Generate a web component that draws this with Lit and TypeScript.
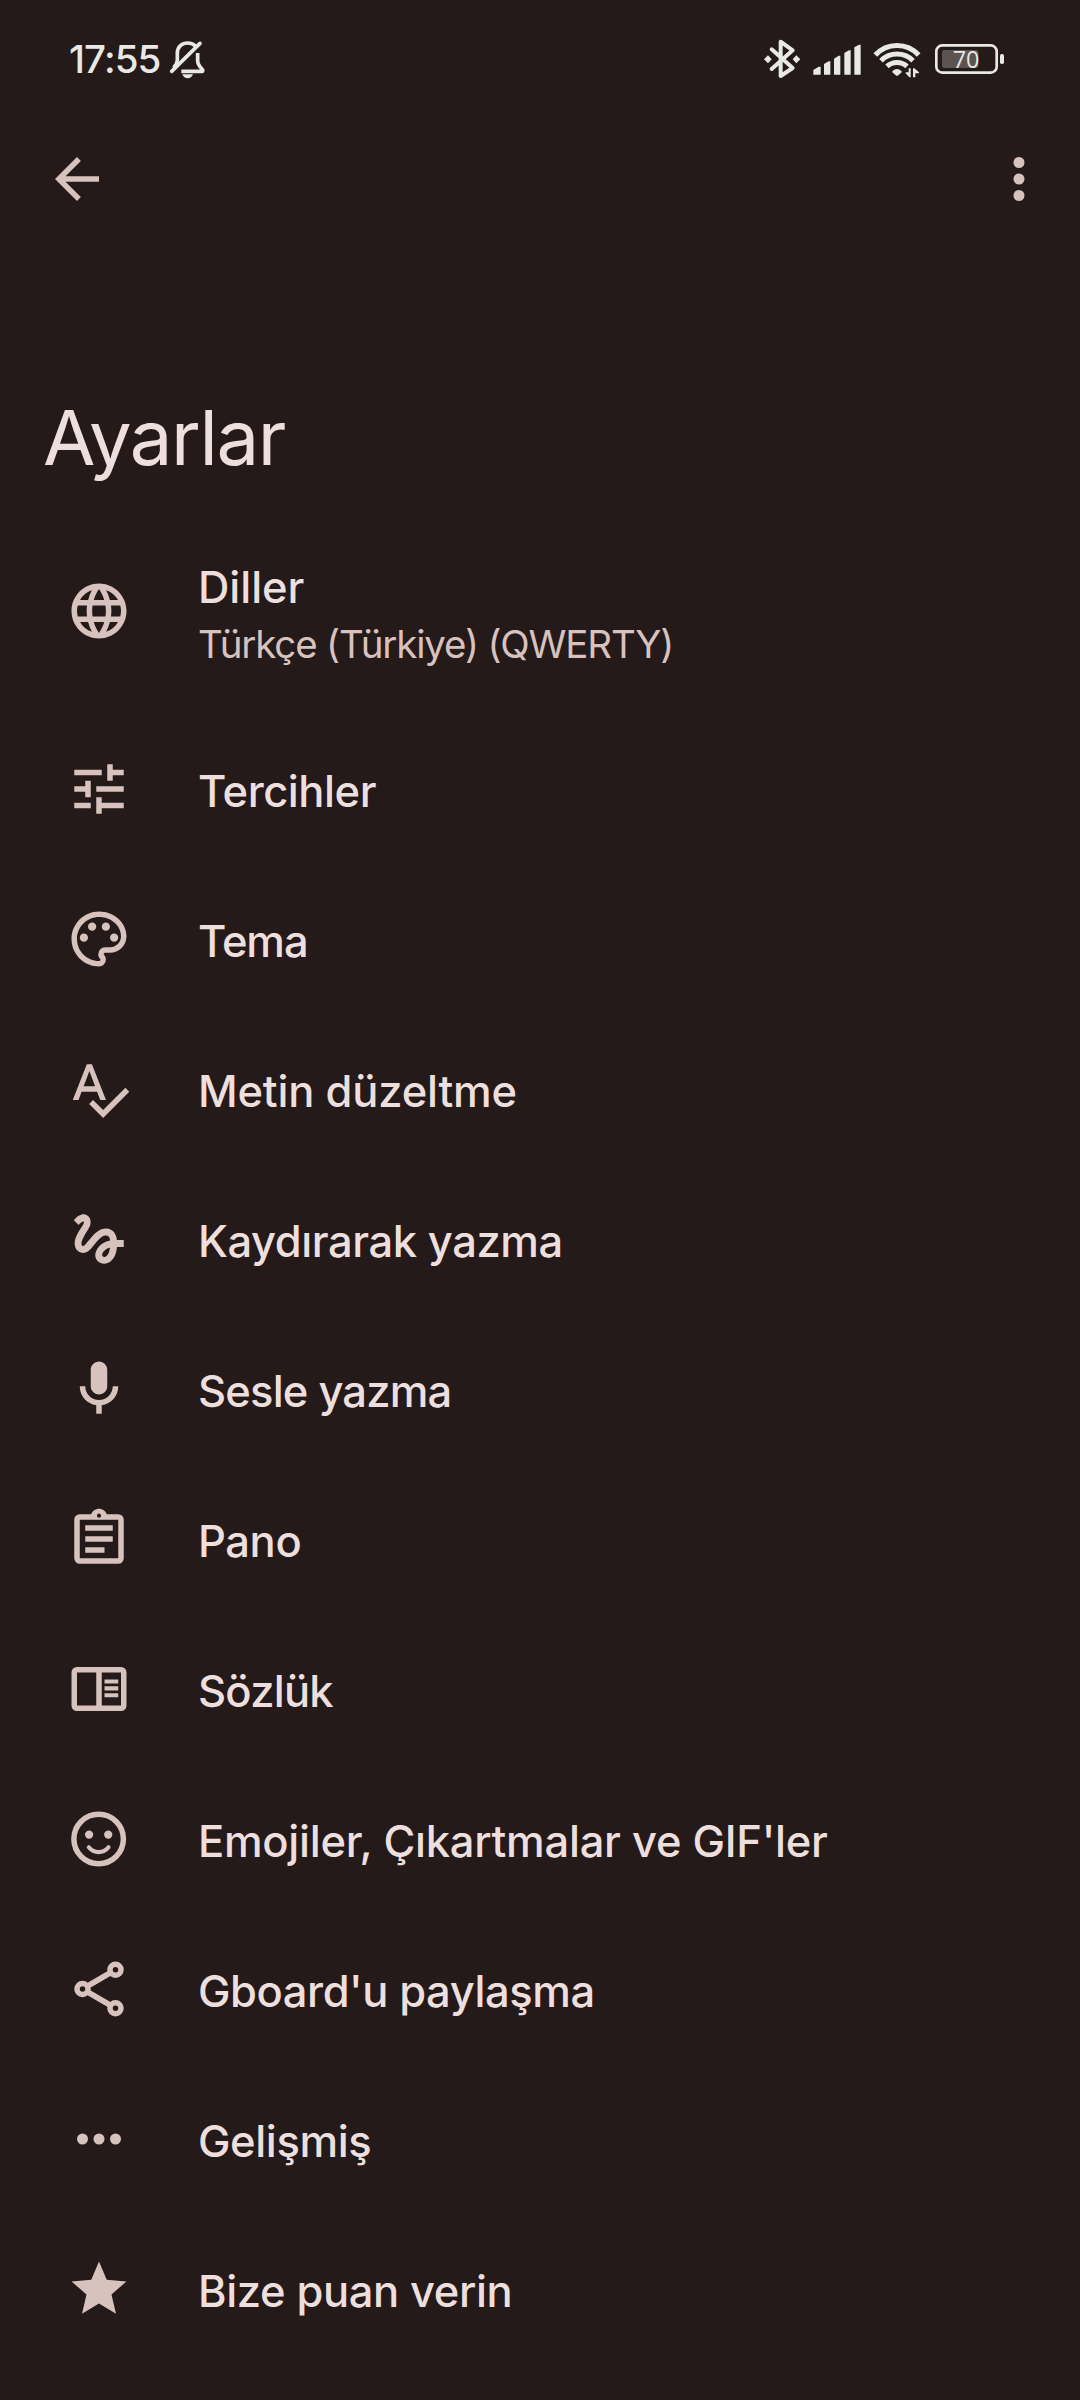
import { LitElement, html, svg, css } from "lit";
import { customElement } from "lit/decorators.js";
import { styleMap } from "lit/directives/style-map.js";

const icons = {
  language: svg`<path d="M11.99 2C6.47 2 2 6.48 2 12s4.47 10 9.99 10C17.52 22 22 17.52 22 12S17.52 2 11.99 2zm6.93 6h-2.95c-.32-1.25-.78-2.45-1.38-3.56 1.84.63 3.37 1.91 4.33 3.56zM12 4.04c.83 1.2 1.48 2.53 1.91 3.96h-3.82c.43-1.43 1.08-2.76 1.91-3.96zM4.26 14C4.1 13.36 4 12.69 4 12s.1-1.36.26-2h3.38c-.08.66-.14 1.32-.14 2s.06 1.34.14 2H4.26zm.82 2h2.95c.32 1.25.78 2.45 1.38 3.56-1.84-.63-3.37-1.9-4.33-3.56zm2.95-8H5.08c.96-1.66 2.49-2.93 4.33-3.56C8.81 5.55 8.35 6.75 8.03 8zM12 19.96c-.83-1.2-1.48-2.53-1.91-3.96h3.82c-.43 1.43-1.08 2.76-1.91 3.96zM14.34 14H9.66c-.09-.66-.16-1.32-.16-2s.07-1.35.16-2h4.68c.09.65.16 1.32.16 2s-.07 1.34-.16 2zm.25 5.56c.6-1.11 1.06-2.31 1.38-3.56h2.95c-.96 1.65-2.49 2.93-4.33 3.56zM16.36 14c.08-.66.14-1.32.14-2s-.06-1.34-.14-2h3.38c.16.64.26 1.31.26 2s-.1 1.36-.26 2h-3.38z"/>`,
  tune: svg`<path d="M3 17v2h6v-2H3zM3 5v2h10V5H3zm10 16v-2h8v-2h-8v-2h-2v6h2zM7 9v2H3v2h4v2h2V9H7zm14 4v-2H11v2h10zm-6-4h2V7h4V5h-4V3h-2v6z"/>`,
  palette: svg`<path d="M12 22C6.49 22 2 17.51 2 12S6.49 2 12 2s10 4.04 10 9c0 3.31-2.69 6-6 6h-1.77c-.28 0-.5.22-.5.5 0 .12.05.23.13.33.41.47.64 1.06.64 1.67A2.5 2.5 0 0 1 12 22zm0-18c-4.41 0-8 3.59-8 8s3.59 8 8 8c.28 0 .5-.22.5-.5a.54.54 0 0 0-.14-.35c-.41-.46-.63-1.05-.63-1.65a2.5 2.5 0 0 1 2.5-2.5H16c2.21 0 4-1.79 4-4 0-3.86-3.59-7-8-7z"/><circle cx="6.5" cy="11.5" r="1.5"/><circle cx="9.5" cy="7.5" r="1.5"/><circle cx="14.5" cy="7.5" r="1.5"/><circle cx="17.5" cy="11.5" r="1.5"/>`,
  spellcheck: svg`<path d="M12.45 16h2.09L9.43 3H7.57L2.46 16h2.09l1.12-3h5.64l1.14 3zm-6.02-5L8.5 5.48 10.57 11H6.43zm15.16.59l-8.09 8.09L9.83 16l-1.41 1.41 5.09 5.09L23 13l-1.41-1.41z"/>`,
  gesture: svg`<path d="M4.59 6.89c.7-.71 1.4-1.35 1.71-1.22.5.2 0 1.03-.3 1.52-.25.42-2.86 3.89-2.86 6.31 0 1.28.48 2.34 1.34 2.98.75.56 1.74.73 2.64.46 1.07-.31 1.95-1.4 3.06-2.77 1.21-1.49 2.83-3.44 4.08-3.44 1.63 0 1.65 1.01 1.76 1.79-3.78.64-5.38 3.67-5.38 5.37 0 1.7 1.44 3.09 3.21 3.09 1.63 0 4.29-1.33 4.69-6.1H21v-2.5h-2.47c-.15-1.65-1.09-4.2-4.03-4.2-2.25 0-4.18 1.91-4.94 2.84-.58.73-2.06 2.48-2.29 2.72-.25.3-.68.84-1.11.84-.45 0-.72-.83-.36-1.92.35-1.09 1.4-2.86 1.85-3.52.78-1.14 1.3-1.92 1.3-3.28C8.95 3.69 7.31 3 6.44 3 5.12 3 3.97 4 3.72 4.25c-.36.36-.66.66-.88.93l1.75 1.71zm9.29 11.66c-.31 0-.74-.26-.74-.72 0-.6.73-2.2 2.87-2.76-.3 2.69-1.43 3.48-2.13 3.48z"/>`,
  mic: svg`<path d="M12 14c1.66 0 3-1.34 3-3V5c0-1.66-1.34-3-3-3S9 3.34 9 5v6c0 1.66 1.34 3 3 3zm5-3c0 2.76-2.24 5-5 5s-5-2.24-5-5H5c0 3.53 2.61 6.43 6 6.92V21h2v-3.08c3.39-.49 6-3.39 6-6.92h-2z"/>`,
  clipboard: svg`<path d="M7 15h7v2H7zm0-4h10v2H7zm0-4h10v2H7z"/><path fill-rule="evenodd" d="M19 3h-4.18C14.4 1.84 13.3 1 12 1s-2.4.84-2.82 2H5a2 2 0 0 0-2 2v14a2 2 0 0 0 2 2h14a2 2 0 0 0 2-2V5a2 2 0 0 0-2-2zM12 2.75a.75.75 0 1 1 0 1.5.75.75 0 0 1 0-1.5zM19 19H5V5h14v14z"/>`,
  dictionary: svg`<path fill-rule="evenodd" d="M4 4h16a2 2 0 0 1 2 2v12a2 2 0 0 1-2 2H4a2 2 0 0 1-2-2V6a2 2 0 0 1 2-2zM4 6v12h7V6zM13 6v12h7V6z"/><path d="M14 8.5h5V10h-5zM14 11h5v1.5h-5zM14 13.5h5V15h-5z"/>`,
  emoji: svg`<circle cx="11.87" cy="12" r="9" fill="none" stroke="currentColor" stroke-width="2"/><circle cx="8.4" cy="10.4" r="1.5"/><circle cx="15.35" cy="10.4" r="1.5"/><path d="M8.3 15Q9.7 16.75 11.87 16.75T15.45 15" fill="none" stroke="currentColor" stroke-width="1.5" stroke-linecap="round"/>`,
  share: svg`<path d="M16.3 6 7.7 11M7.7 13l8.6 5" fill="none" stroke="currentColor" stroke-width="2"/><g fill="none" stroke="currentColor" stroke-width="2"><circle cx="18" cy="5" r="2"/><circle cx="6" cy="12" r="2"/><circle cx="18" cy="19" r="2"/></g>`,
  more: svg`<circle cx="6" cy="12" r="2"/><circle cx="12" cy="12" r="2"/><circle cx="18" cy="12" r="2"/>`,
  star: svg`<path d="M12 17.27 18.18 21l-1.64-7.03L22 9.24l-7.19-.61L12 2 9.19 8.63 2 9.24l5.46 4.73L5.82 21z"/>`,
  back: svg`<path d="M20 11H7.83l5.59-5.59L12 4l-8 8 8 8 1.41-1.41L7.83 13H20v-2z"/>`,
  overflow: svg`<circle cx="12" cy="6" r="2"/><circle cx="12" cy="12" r="2"/><circle cx="12" cy="18" r="2"/>`,
};

type IconName = keyof typeof icons;

const icon = (name: IconName) =>
  html`<svg class="icon" viewBox="0 0 24 24" fill="currentColor" aria-hidden="true">${icons[name]}</svg>`;

interface Item {
  icon: IconName;
  label: string;
  detail?: string;
  /** Letter spacing of the label, in pixels. */
  tracking: number;
}

const items: Item[] = [
  { icon: "language", label: "Diller", detail: "Türkçe (Türkiye) (QWERTY)", tracking: -0.05 },
  { icon: "tune", label: "Tercihler", tracking: -0.45 },
  { icon: "palette", label: "Tema", tracking: -1.1 },
  { icon: "spellcheck", label: "Metin düzeltme", tracking: -0.2 },
  { icon: "gesture", label: "Kaydırarak yazma", tracking: -0.43 },
  { icon: "mic", label: "Sesle yazma", tracking: -0.8 },
  { icon: "clipboard", label: "Pano", tracking: -0.4 },
  { icon: "dictionary", label: "Sözlük", tracking: -0.75 },
  { icon: "emoji", label: "Emojiler, Çıkartmalar ve GIF'ler", tracking: -0.26 },
  { icon: "share", label: "Gboard'u paylaşma", tracking: -0.43 },
  { icon: "more", label: "Gelişmiş", tracking: -0.4 },
  { icon: "star", label: "Bize puan verin", tracking: -0.38 },
];

@customElement("status-bar")
export class StatusBar extends LitElement {
  static styles = css`
    :host {
      display: flex;
      align-items: center;
      justify-content: space-between;
      height: 118px;
      padding: 0 76px 0 69px;
      box-sizing: border-box;
      color: #e8e8e6;
      font: 500 38.5px/44px Inter, "Liberation Sans", sans-serif;
    }
    .left {
      display: flex;
      align-items: center;
    }
    .time {
      width: 99px;
      letter-spacing: -0.9px;
      white-space: nowrap;
    }
    svg {
      display: block;
    }
    .charge {
      font: 500 72px "Open Sans", "Liberation Sans", sans-serif;
    }
  `;

  render() {
    return html`
      <div class="left">
        <span class="time">17:55</span>
        <svg width="40" height="44" viewBox="384 51 120 132" fill="none" stroke="currentColor" stroke-width="11" stroke-linecap="round" stroke-linejoin="round">
          <path d="M395 154 480 70" />
          <path d="M403 140C410 132 412 128 412 120V100C412 80 426 69 443 69 453 69 462 73 468 79" />
          <path d="M473 99V122C473 134 481 141 488 150V154H424" stroke-linecap="butt" />
          <path d="M427 163H459C456 171 450 175 443 175S430 171 427 163Z" fill="currentColor" stroke="none" />
        </svg>
      </div>
      <svg width="244" height="44" viewBox="60 51 732 132" fill="currentColor">
        <path d="M95 88 158 144 122 168V65L158 91 95 147" fill="none" stroke="currentColor" stroke-width="12" stroke-linejoin="round" stroke-linecap="round" />
        <path d="M84 106 95 118 84 130 72 118ZM169 106 181 118 169 130 158 118Z" />
        <path d="M220 150 236 140H242V164H220ZM252 132 266 124H271V164H252ZM282 116 296 107H301V164H282ZM313 99 327 91H332V164H313ZM343 82 357 74H362V164H343Z" />
        <g fill="none" stroke="currentColor" stroke-width="15">
          <path d="M406 105A88 88 0 0 1 536 105" />
          <path d="M423 122A68 68 0 0 1 519 122" />
          <path d="M441 139A44 44 0 0 1 501 139" />
        </g>
        <path d="M457 154Q471 140 485 154V157L473 167H469L457 157Z" />
        <path d="M506 145H512V172H508L497 160V157H506ZM519 172V145H523L537 157V160H526V172Z" />
        <rect x="606" y="90" width="109" height="54" rx="8" fill="#5c5453" />
        <rect x="589" y="76" width="181" height="82" rx="18" fill="none" stroke="currentColor" stroke-width="8" />
        <rect x="780" y="102" width="12" height="30" rx="5" />
        <text class="charge" x="678" y="144" text-anchor="middle" textLength="80" lengthAdjust="spacingAndGlyphs">70</text>
      </svg>
    `;
  }
}

@customElement("app-root")
export class AppRoot extends LitElement {
  static styles = css`
    :host {
      display: flex;
      flex-direction: column;
      height: 2400px;
      overflow: hidden;
      background: #231a19;
      color: #eddfdd;
      font-family: Inter, "Liberation Sans", sans-serif;
    }
    .icon {
      display: block;
      flex: none;
      width: 66px;
      height: 66px;
      color: #d8c2be;
    }
    .toolbar {
      display: flex;
      justify-content: space-between;
      align-items: center;
      height: 122px;
      padding: 0 28px 0 44px;
    }
    .title {
      margin: 147px 0 0 43px;
      font-size: 76px;
      line-height: 100px;
      font-weight: 400;
      letter-spacing: -1.4px;
    }
    .list {
      margin: 0;
      padding: 35px 0 0;
      list-style: none;
    }
    .item {
      display: flex;
      align-items: center;
      gap: 66px;
      height: 150px;
      padding-left: 66px;
    }
    .item.detailed {
      height: 178px;
      margin-bottom: 14px;
    }
    .text {
      padding-top: 4px;
      white-space: nowrap;
    }
    .detailed .text {
      padding-top: 7px;
    }
    .label {
      font-size: 43.5px;
      line-height: 60px;
      font-weight: 500;
    }
    .detail {
      font-size: 38.5px;
      line-height: 55px;
      color: #d8c2be;
      letter-spacing: -1.17px;
    }
  `;

  render() {
    return html`
      <status-bar></status-bar>
      <nav class="toolbar">${icon("back")}${icon("overflow")}</nav>
      <h1 class="title">Ayarlar</h1>
      <ul class="list">
        ${items.map(
          (item) => html`
            <li class="item ${item.detail ? "detailed" : ""}">
              ${icon(item.icon)}
              <div class="text">
                <div class="label" style=${styleMap({ letterSpacing: `${item.tracking}px` })}>${item.label}</div>
                ${item.detail ? html`<div class="detail">${item.detail}</div>` : ""}
              </div>
            </li>
          `
        )}
      </ul>
    `;
  }
}
